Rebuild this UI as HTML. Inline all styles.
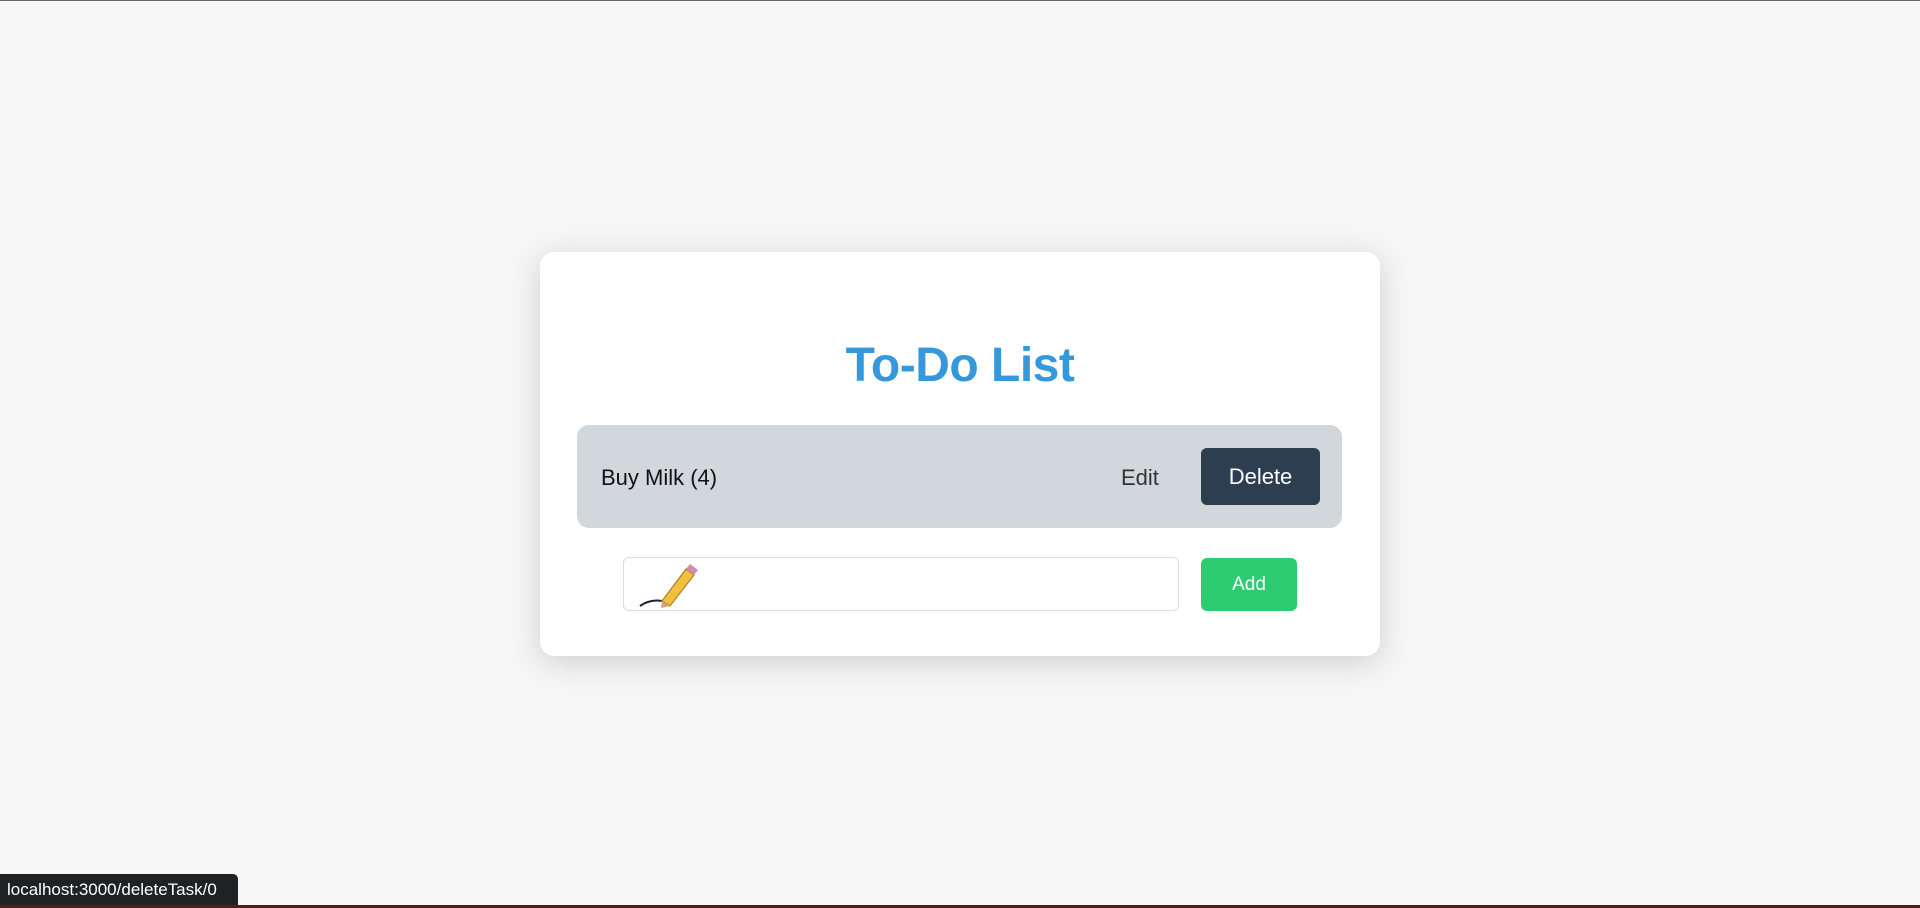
<!DOCTYPE html>
<html><head><meta charset="utf-8"><style>
html,body{margin:0;padding:0;}
body{width:1920px;height:907px;background:#f6f6f6;position:relative;overflow:hidden;font-family:"Liberation Sans",sans-serif;border-top:1px solid #666;box-sizing:border-box;}
.card{position:absolute;left:540px;top:251px;width:840px;height:404px;background:#fff;border-radius:14px;box-shadow:0 6px 30px rgba(0,0,0,0.16);}
h1{position:absolute;left:0;right:0;top:332px;margin:0;text-align:center;color:#3498db;font-size:48px;font-weight:bold;line-height:66px;letter-spacing:-0.5px;}
.row{position:absolute;left:577px;top:424px;width:765px;height:103px;background:#d2d7dc;border-radius:12px;}
.txt{position:absolute;left:601px;top:464px;font-size:22px;color:#111;}
.edit{position:absolute;left:1121px;top:464px;font-size:22px;color:#333;}
.del{position:absolute;left:1201px;top:447px;width:119px;height:57px;background:#2c3e50;border-radius:6px;color:#fff;font-size:22px;text-align:center;line-height:57px;}
.inp{position:absolute;left:623px;top:556px;width:556px;height:54px;border:1px solid #ddd;border-radius:6px;box-sizing:border-box;background:#fff;}
.add{position:absolute;left:1201px;top:557px;width:96px;height:53px;background:#2ecc71;border-radius:6px;color:#fff;font-size:19px;text-align:center;line-height:53px;}
.status{position:absolute;left:0;top:873px;width:238px;height:31px;background:#202124;color:#fff;font-size:17px;line-height:31px;padding-left:7px;box-sizing:border-box;border-top-right-radius:5px;}
.strip{position:absolute;left:0;top:904px;width:1920px;height:3px;background:#5a1a1a;}
</style></head><body>
<div class="card"></div>
<h1>To-Do List</h1>
<div class="row"></div>
<div class="txt">Buy Milk (4)</div>
<div class="edit">Edit</div>
<div class="del">Delete</div>
<div class="inp">
<svg width="64" height="48" style="position:absolute;left:14px;top:3px" viewBox="0 0 64 48">
<path d="M2 45 Q12 38 24 40" stroke="#223" stroke-width="2" fill="none"/>
<path d="M24 40 L48 8 L56 14 L32 45 Z" fill="#f0c040" stroke="#b08020" stroke-width="1.2"/>
<path d="M24 40 L32 45 L23 47 Z" fill="#d9a07a"/>
<path d="M48 8 L52 3 L60 9 L56 14 Z" fill="#d48aa8"/>
</svg></div>
<div class="add">Add</div>
<div class="status">localhost:3000/deleteTask/0</div>
<div class="strip"></div>
</body></html>
